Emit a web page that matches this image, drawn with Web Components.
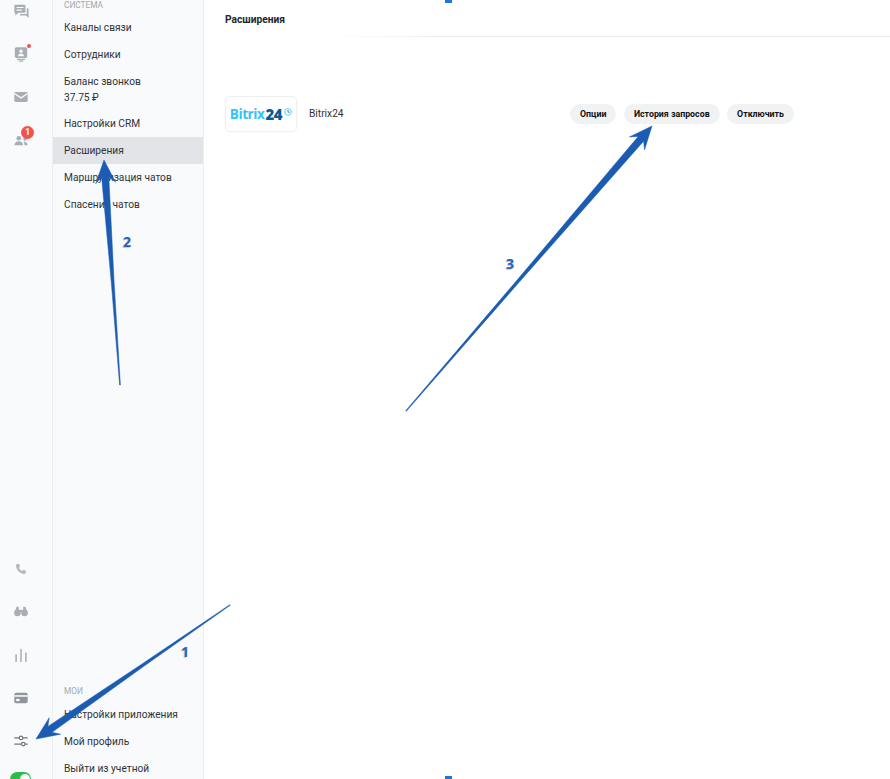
<!DOCTYPE html>
<html lang="ru">
<head>
<meta charset="utf-8">
<title>Расширения</title>
<style>
  html, body { margin: 0; height: 100%; overflow: hidden; background: #fff; }
  body { font-family: Roboto, "Noto Sans", sans-serif; color: #2b2f33; }
</style>
</head>
<body>
<app-shell>
  <icon-rail slot="rail"></icon-rail>
  <side-menu slot="menu">
    <menu-label>СИСТЕМА</menu-label>
    <menu-item>Каналы связи</menu-item>
    <menu-item>Сотрудники</menu-item>
    <menu-item tall>Баланс звонков<br>37.75 ₽</menu-item>
    <menu-item>Настройки CRM</menu-item>
    <menu-item active>Расширения</menu-item>
    <menu-item>Маршрутизация чатов</menu-item>
    <menu-item>Спасение чатов</menu-item>
    <menu-label slot="bottom">МОИ</menu-label>
    <menu-item slot="bottom">Настройки приложения</menu-item>
    <menu-item slot="bottom">Мой профиль</menu-item>
    <menu-item slot="bottom">Выйти из учетной</menu-item>
  </side-menu>
  <main-panel title-text="Расширения">
    <extension-row name="Bitrix24">
      <pill-button>Опции</pill-button>
      <pill-button>История запросов</pill-button>
      <pill-button>Отключить</pill-button>
    </extension-row>
  </main-panel>
</app-shell>
<note-layer></note-layer>

<script>
class AppShell extends HTMLElement {
  constructor() {
    super();
    this.attachShadow({ mode: "open" });
    this.shadowRoot.innerHTML = `
      <style>
        :host { display: flex; width: 890px; height: 779px; overflow: hidden; }
        ::slotted(main-panel) { flex: 1; min-width: 0; }
      </style>
      <slot name="rail"></slot>
      <slot name="menu"></slot>
      <slot></slot>
    `;
  }
}

const RAIL_ICONS = {
  chats: `<path d="M2.500 2h10.500a1 1 0 0 1 1 1v7a1 1 0 0 1-1 1H6l-3.500 3V11h0a1 1 0 0 1-1-1V3a1 1 0 0 1 1-1z" fill="#a9aeb4"/><path d="M4 5h8M4 8h6" stroke="#f9fafc" stroke-width="1.200"/><path d="M15.500 6h1a1 1 0 0 1 1 1v10l-3-3H8v-1.500h7.500z" fill="#a9aeb4"/>`,
  agent: `<rect x="2" y="1.500" width="14" height="12" rx="2" fill="#a9aeb4"/><circle cx="9" cy="6" r="2" fill="#f9fafc"/><path d="M5.500 11.500c.4-2 1.800-3 3.500-3s3.100 1 3.500 3z" fill="#f9fafc"/><path d="M4.500 15h9M6.500 17h5" stroke="#a9aeb4" stroke-width="1.300"/>`,
  mail: `<rect x="1.500" y="3.500" width="15" height="11" rx="1.500" fill="#a9aeb4"/><path d="M1.500 5l7.500 5 7.500-5" fill="none" stroke="#f9fafc" stroke-width="1.400"/>`,
  people: `<circle cx="6.500" cy="7" r="2.600" fill="#a9aeb4"/><path d="M1.500 15c.3-3 2.400-4.500 5-4.500s4.700 1.500 5 4.500z" fill="#a9aeb4"/><circle cx="13.500" cy="8" r="2" fill="#a9aeb4"/><path d="M12.500 11c2 0 3.700 1.100 4 4h-3.500c0-1.500-.3-2.900-1.300-3.800z" fill="#a9aeb4"/>`,
  phone: `<path d="M4.500 3.500l2.300-.5 1.300 3.300-1.400 1.200c.7 1.600 1.900 2.900 3.500 3.700l1.300-1.400 3.200 1.400-.5 2.300c-.2.800-.9 1.300-1.700 1.200C7.500 14.200 3.600 10.100 3.300 5.200c0-.8.500-1.500 1.200-1.700z" fill="#b4b9bf"/>`,
  binoculars: `<circle cx="5" cy="10" r="3.700" fill="#a9aeb4"/><circle cx="13" cy="10" r="3.700" fill="#a9aeb4"/><path d="M2.500 8l1.500-5h2.500v5zM15.500 8L14 3h-2.500v5z" fill="#a9aeb4"/><rect x="7.500" y="6.500" width="3" height="3" fill="#a9aeb4"/>`,
  chart: `<path d="M3.500 9v7M9 3v13M14.500 7v9" stroke="#b4b9bf" stroke-width="2" stroke-linecap="round"/>`,
  card: `<rect x="1.500" y="3" width="15" height="12" rx="2" fill="#8f959b"/><rect x="1.500" y="5.800" width="15" height="1.800" fill="#f9fafc"/><rect x="3.500" y="10" width="4" height="2.500" fill="#f9fafc"/>`,
  sliders: `<path d="M1.500 5.500h5.500M11 5.500h5.500M1.500 12.500h8M13.500 12.500h3" stroke="#6f757c" stroke-width="1.300" fill="none"/><circle cx="9" cy="5.500" r="2" stroke="#6f757c" stroke-width="1.300" fill="none"/><circle cx="11.500" cy="12.500" r="2" stroke="#6f757c" stroke-width="1.300" fill="none"/>`
};

class IconRail extends HTMLElement {
  constructor() {
    super();
    this.attachShadow({ mode: "open" });
    const cell = (name, extra = "") => `
      <div class="cell"><svg width="16" height="16" viewBox="0 0 18 18">${RAIL_ICONS[name]}</svg>${extra}</div>`;
    this.shadowRoot.innerHTML = `
      <style>
        :host {
          display: flex; flex-direction: column; justify-content: space-between;
          box-sizing: border-box; flex: none; width: 53px; height: 779px;
          background: #f9fafc; border-right: 1px solid #eceef1;
        }
        .group { display: flex; flex-direction: column; width: 41px; }
        .top { margin-top: -11px; }
        .cell { position: relative; display: flex; align-items: center; justify-content: center; height: 43px; }
        .dot { position: absolute; top: 12px; left: 27px; width: 4px; height: 4px; border-radius: 50%; background: #f4524d; }
        .badge {
          position: absolute; top: 8px; left: 21px; width: 13px; height: 13px; border-radius: 50%;
          background: #f4524d; color: #fff; font: 700 9px/13px Roboto, sans-serif; text-align: center;
        }
        .toggle {
          flex: none; box-sizing: border-box; display: flex; justify-content: flex-end; align-items: flex-start;
          width: 21px; height: 14px; margin: 10px 0 -7px 10px; padding: 2px 1px; border-radius: 7px; background: #2dbb4c;
        }
        .toggle i { width: 10px; height: 10px; border-radius: 50%; background: #fff; }
      </style>
      <div class="group top">
        ${cell("chats")}
        ${cell("agent", '<span class="dot"></span>')}
        ${cell("mail")}
        ${cell("people", '<span class="badge">1</span>')}
      </div>
      <div class="group">
        ${cell("phone")}
        ${cell("binoculars")}
        ${cell("chart")}
        ${cell("card")}
        ${cell("sliders")}
        <div class="toggle"><i></i></div>
      </div>
    `;
  }
}

class SideMenu extends HTMLElement {
  constructor() {
    super();
    this.attachShadow({ mode: "open" });
    this.shadowRoot.innerHTML = `
      <style>
        :host {
          display: flex; flex-direction: column; justify-content: space-between;
          box-sizing: border-box; flex: none; width: 151px; height: 779px;
          background: #f9fafc; border-right: 1px solid #eceef1;
        }
        .top { display: block; margin-top: -2.500px; }
        .bottom { display: block; margin-bottom: -3px; }
      </style>
      <div class="top"><slot></slot></div>
      <div class="bottom"><slot name="bottom"></slot></div>
    `;
  }
}

class MenuLabel extends HTMLElement {
  constructor() {
    super();
    this.attachShadow({ mode: "open" });
    this.shadowRoot.innerHTML = `
      <style>
        :host {
          display: block; padding: 0 0 0 11px; height: 16.500px;
          font: 400 8.300px/15px Roboto, sans-serif; color: #a3a8ae;
        }
        :host([slot="bottom"]) { line-height: 12px; }
      </style>
      <slot></slot>
    `;
  }
}

class MenuItem extends HTMLElement {
  constructor() {
    super();
    this.attachShadow({ mode: "open" });
    this.shadowRoot.innerHTML = `
      <style>
        :host {
          display: flex; align-items: center; box-sizing: border-box; min-height: 27px;
          padding: 0 0 0 11px; font: 400 10.200px/16px Roboto, sans-serif; color: #2f3337;
          white-space: nowrap;
        }
        :host([tall]) { min-height: 42px; padding-top: 1.500px; }
        :host([active]) { background: #e2e4e7; }
      </style>
      <div><slot></slot></div>
    `;
  }
}

class MainPanel extends HTMLElement {
  constructor() {
    super();
    this.attachShadow({ mode: "open" });
    const title = this.getAttribute("title-text") || "";
    this.shadowRoot.innerHTML = `
      <style>
        :host { display: block; background: #fff; }
        header {
          box-sizing: border-box; height: 37px; padding: 11.500px 0 0 21px;
          font: 700 10.200px/16px Roboto, sans-serif; color: #23272b; position: relative;
        }
        header::after {
          content: ""; position: absolute; left: 120px; right: 0; bottom: 0; height: 1px;
          background: linear-gradient(90deg, #fff, #eceef0 20%);
        }
        .body { padding: 59px 96px 0 21px; }
      </style>
      <header>${title}</header>
      <div class="body"><slot></slot></div>
    `;
  }
}

class ExtensionRow extends HTMLElement {
  constructor() {
    super();
    this.attachShadow({ mode: "open" });
    const name = this.getAttribute("name") || "";
    this.shadowRoot.innerHTML = `
      <style>
        :host { display: flex; align-items: center; height: 36px; }
        .logo {
          box-sizing: border-box; flex: none; display: flex; align-items: center; justify-content: center;
          width: 72px; height: 36px; border: 1px solid #eeeff1; border-radius: 5px;
          box-shadow: 0 0 2px rgba(0, 0, 0, .04);
          font: 700 13.500px/18px "Open Sans", Roboto, sans-serif; letter-spacing: -.4px;
        }
        .logo .a { color: #2fc6f6; font-weight: 700; }
        .logo .b { color: #0b5a94; font-size: 15px; font-weight: 800; margin-left: 1px; }
        .logo svg { align-self: flex-start; margin: 11px 0 0 2px; }
        .name { margin-left: 12px; font: 400 10.200px/16px Roboto, sans-serif; color: #2f3337; }
        .actions { margin-left: auto; display: flex; gap: 7.500px; }
      </style>
      <div class="logo">
        <span class="a">Bitrix</span><span class="b">24</span>
        <svg width="8" height="8" viewBox="0 0 8 8"><circle cx="4" cy="4" r="3.300" fill="none" stroke="#2fc6f6" stroke-width=".8"/><path d="M4 2v2.200h1.700" fill="none" stroke="#0b5a94" stroke-width=".7"/></svg>
      </div>
      <div class="name">${name}</div>
      <div class="actions"><slot></slot></div>
    `;
  }
}

class PillButton extends HTMLElement {
  constructor() {
    super();
    this.attachShadow({ mode: "open" });
    this.shadowRoot.innerHTML = `
      <style>
        :host {
          display: inline-flex; align-items: center; height: 20px; padding: 0 10px;
          border-radius: 10px; background: #f0f2f3; color: #111;
          font: 700 8.800px/20px Roboto, sans-serif; white-space: nowrap;
        }
      </style>
      <slot></slot>
    `;
  }
}

// arrows and step numbers drawn over the screenshot
const ARROWS = [
  { from: [230, 605], to: [36, 739], num: "1", at: [185, 652] },
  { from: [120, 385], to: [104, 160], num: "2", at: [127, 242] },
  { from: [406, 411], to: [652, 126], num: "3", at: [510, 264] }
];

function arrowPoints([x1, y1], [x2, y2]) {
  const len = Math.hypot(x2 - x1, y2 - y1);
  const ux = (x2 - x1) / len, uy = (y2 - y1) / len;
  const nx = -uy, ny = ux;
  const at = (back, side) => `${(x2 - ux * back + nx * side).toFixed(1)},${(y2 - uy * back + ny * side).toFixed(1)}`;
  // shaft stays thin for the far half, then widens towards the head
  const mid = len * .55;
  return [at(len, .4), at(mid, 1.4), at(17, 3.6), at(23, 10), at(0, 0), at(23, -10), at(17, -3.6), at(mid, -1.4), at(len, -.4)].join(" ");
}

class NoteLayer extends HTMLElement {
  constructor() {
    super();
    this.attachShadow({ mode: "open" });
    const polys = ARROWS.map(a => `<polygon points="${arrowPoints(a.from, a.to)}"/>`).join("");
    const nums = ARROWS.map(a => `<span style="left:${a.at[0] - 5}px;top:${a.at[1] - 9}px">${a.num}</span>`).join("");
    this.shadowRoot.innerHTML = `
      <style>
        :host { position: absolute; left: 0; top: 0; width: 890px; height: 779px; pointer-events: none; }
        svg { position: absolute; left: 0; top: 0; }
        polygon { fill: #1b5cb2; stroke: #1b5cb2; stroke-width: .5; stroke-linejoin: round; }
        span {
          position: absolute; width: 10px; text-align: center;
          font: 700 14px/18px "Open Sans", sans-serif; color: #2563b8;
          text-shadow: -1px 1px 0 #c9ccd0, 1px 0 0 #e6e8ec;
        }
        i { position: absolute; left: 445px; width: 7px; height: 3px; background: #1f74e0; }
      </style>
      <svg width="890" height="779" viewBox="0 0 890 779">${polys}</svg>
      ${nums}
      <i style="top:0"></i>
      <i style="bottom:0"></i>
    `;
  }
}

customElements.define("app-shell", AppShell);
customElements.define("icon-rail", IconRail);
customElements.define("side-menu", SideMenu);
customElements.define("menu-label", MenuLabel);
customElements.define("menu-item", MenuItem);
customElements.define("main-panel", MainPanel);
customElements.define("extension-row", ExtensionRow);
customElements.define("pill-button", PillButton);
customElements.define("note-layer", NoteLayer);
</script>
</body>
</html>
